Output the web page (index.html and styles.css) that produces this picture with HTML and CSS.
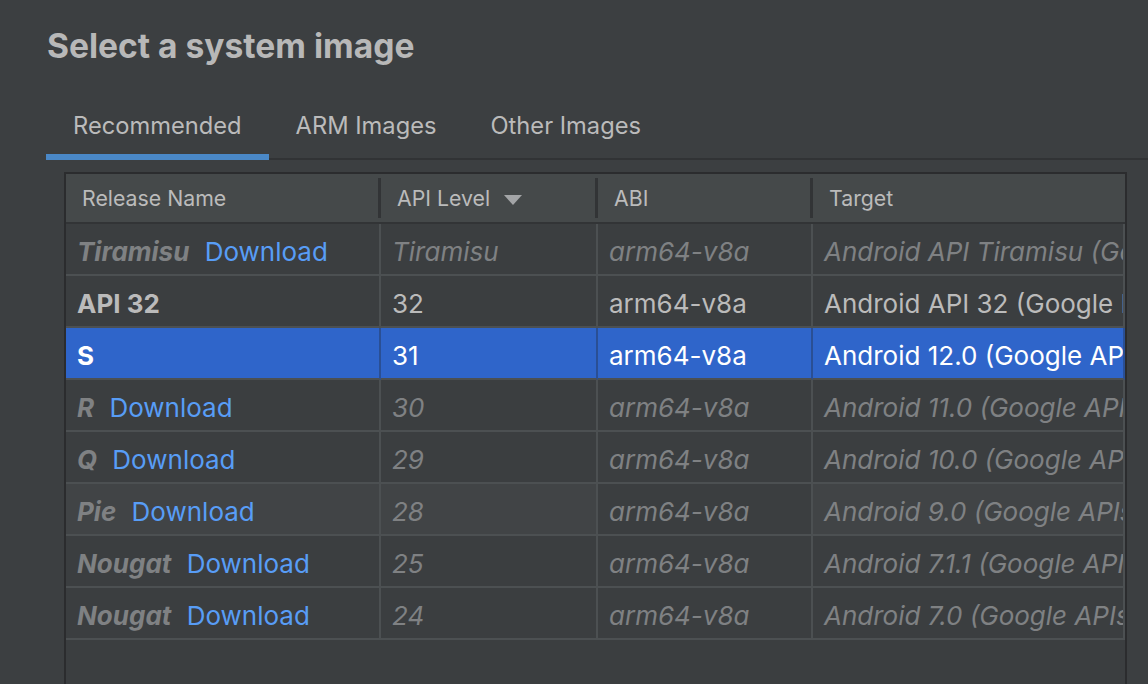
FILE: index.html
```html
<!DOCTYPE html>
<html lang="en">
<head>
    <meta charset="UTF-8">
    <title>Select a system image</title>
    <link rel="stylesheet" href="styles.css">
</head>
<body>
    <h1 class="title">Select a system image</h1>

    <div class="tabs">
        <div class="tab active">Recommended</div>
        <div class="tab">ARM Images</div>
        <div class="tab">Other Images</div>
    </div>

    <div class="table-box">
        <table class="images">
            <colgroup>
                <col class="c-name">
                <col class="c-api">
                <col class="c-abi">
                <col class="c-target">
            </colgroup>
            <thead>
                <tr>
                    <th class="sep">Release Name</th>
                    <th class="sep">API Level
                        <svg class="sort" width="18" height="10" viewBox="0 0 18 10"><path d="M0 0 H18 L9 10 Z" fill="#a3a5a7"/></svg>
                    </th>
                    <th class="sep">ABI</th>
                    <th>Target</th>
                </tr>
            </thead>
            <tbody>
                <tr class="missing">
                    <td><b>Tiramisu</b> <a class="dl">Download</a></td>
                    <td>Tiramisu</td>
                    <td>arm64-v8a</td>
                    <td>Android API Tiramisu (Google Play)</td>
                </tr>
                <tr>
                    <td><b>API 32</b></td>
                    <td>32</td>
                    <td>arm64-v8a</td>
                    <td>Android API 32 (Google Play)</td>
                </tr>
                <tr class="selected">
                    <td><b>S</b></td>
                    <td>31</td>
                    <td>arm64-v8a</td>
                    <td>Android 12.0 (Google APIs)</td>
                </tr>
                <tr class="missing">
                    <td><b>R</b> <a class="dl">Download</a></td>
                    <td>30</td>
                    <td>arm64-v8a</td>
                    <td>Android 11.0 (Google APIs)</td>
                </tr>
                <tr class="missing">
                    <td><b>Q</b> <a class="dl">Download</a></td>
                    <td>29</td>
                    <td>arm64-v8a</td>
                    <td>Android 10.0 (Google APIs)</td>
                </tr>
                <tr class="missing hover">
                    <td><b>Pie</b> <a class="dl">Download</a></td>
                    <td>28</td>
                    <td class="plain">arm64-v8a</td>
                    <td>Android 9.0 (Google APIs)</td>
                </tr>
                <tr class="missing">
                    <td><b>Nougat</b> <a class="dl">Download</a></td>
                    <td>25</td>
                    <td>arm64-v8a</td>
                    <td>Android 7.1.1 (Google APIs)</td>
                </tr>
                <tr class="missing">
                    <td><b>Nougat</b> <a class="dl">Download</a></td>
                    <td>24</td>
                    <td>arm64-v8a</td>
                    <td>Android 7.0 (Google APIs)</td>
                </tr>
            </tbody>
        </table>
    </div>
</body>
</html>
```

FILE: styles.css
```css
body {
    margin: 0;
    background-color: #3c3f41;
    color: #bbbbbb;
    font-family: Inter, "Liberation Sans", sans-serif;
    overflow: hidden;
}
.title {
    margin: 26px 0 0 47px;
    font-size: 33.6px;
    line-height: 40px;
    font-weight: 700;
    color: #b8b8b8;
}
.tabs {
    display: flex;
    margin: 32px 0 0 46px;
    border-bottom: 2px solid #313335;
}
.tab {
    padding: 14px 27px 14px 27px;
    margin-bottom: -2px;
    font-size: 23.7px;
    line-height: 28px;
    border-bottom: 6px solid transparent;
}
.tab.active {
    border-bottom-color: #4a88c7;
}
.table-box {
    margin: 12px 0 0 64px;
    width: 1059px;
    height: 600px;
    border: 2px solid #2b2c2e;
    border-bottom: none;
    background-color: #3b3e40;
}
.images {
    table-layout: fixed;
    width: 1059px;
    border-collapse: separate;
    border-spacing: 0;
}
.c-name { width: 315px; }
.c-api { width: 217px; }
.c-abi { width: 215px; }
.c-target { width: 312px; }
.images th {
    height: 48px;
    padding: 0 16px;
    text-align: left;
    font-weight: 400;
    font-size: 21.3px;
    background-color: #45494a;
    border-bottom: 2px solid #323436;
    white-space: nowrap;
}
.images th.sep {
    background-image: linear-gradient(#323436, #323436);
    background-size: 3px 40px;
    background-position: right center;
    background-repeat: no-repeat;
}
.sort {
    margin-left: 8px;
    vertical-align: 1px;
}
.images td {
    height: 46px;
    padding: 4px 10px 0 11px;
    font-size: 26px;
    white-space: nowrap;
    overflow: hidden;
    border-right: 2px solid #4c5052;
    border-bottom: 2px solid #4c5052;
}
.images b {
    font-weight: 700;
    margin-right: 8px;
}
.missing td {
    color: #7f8183;
    font-style: italic;
}
.dl {
    color: #589df6;
    font-style: normal;
}
.selected td {
    background-color: #2f65ca;
    color: #ffffff;
    border-right-color: #2a4f94;
}
.hover td {
    background-color: #414446;
}
.hover td.plain {
    background-color: #3b3e40;
}
```
